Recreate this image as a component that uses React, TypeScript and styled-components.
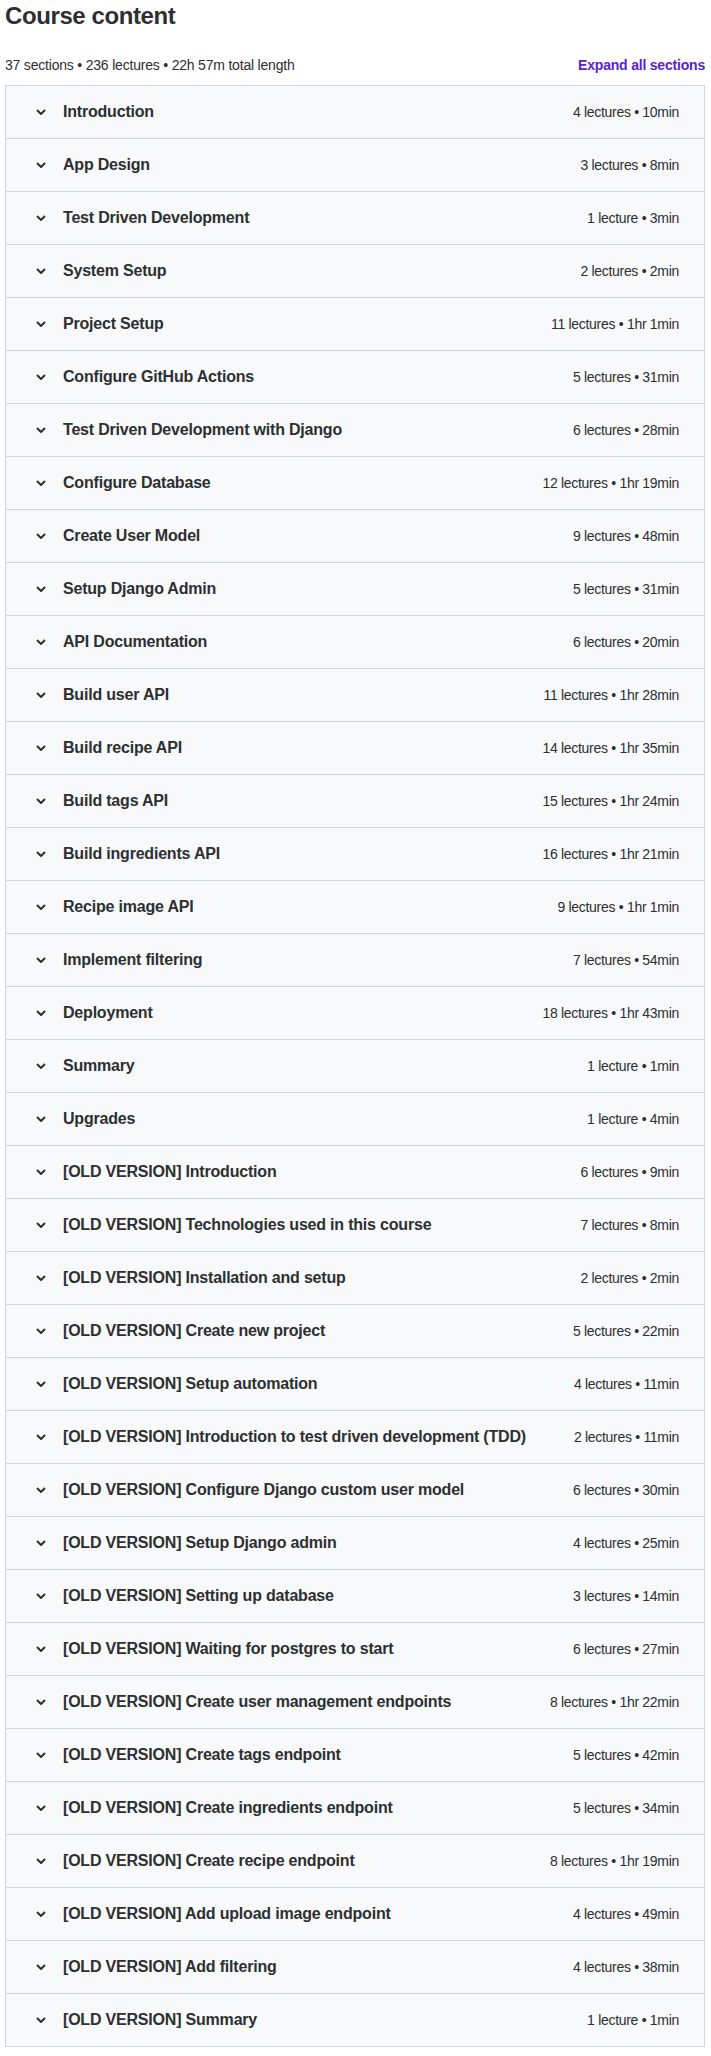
import React from "react";
import styled, { createGlobalStyle } from "styled-components";

const GlobalStyle = createGlobalStyle`
  html, body { margin: 0; padding: 0; background: #ffffff; }
  body {
    font-family: "Liberation Sans", Arial, sans-serif;
    color: #2d2f31;
    -webkit-font-smoothing: antialiased;
  }
`;

const Page = styled.div`
  padding: 0 6px 10px 5px;
`;

const Heading = styled.h2`
  margin: 1px 0 0;
  font-size: 24px;
  line-height: 29px;
  font-weight: 700;
  letter-spacing: -0.4px;
  color: #2d2f31;
`;

const SummaryBar = styled.div`
  display: flex;
  align-items: center;
  justify-content: space-between;
  margin-top: 25px;
  height: 20px;
  margin-bottom: 10px;
`;

const SummaryText = styled.span`
  font-size: 14px;
  line-height: 20px;
  color: #2d2f31;
  letter-spacing: -0.2px;
`;

const ExpandLink = styled.button`
  border: 0;
  background: none;
  padding: 0;
  font-family: inherit;
  font-size: 14px;
  line-height: 20px;
  font-weight: 700;
  color: #5624d0;
  letter-spacing: -0.2px;
  cursor: pointer;
`;

const Accordion = styled.div`
  border: 1px solid #d1d7dc;
`;

const Row = styled.div`
  display: flex;
  align-items: center;
  height: 52px;
  padding: 0 25px 0 29px;
  background: #f7f9fa;
  & + & {
    border-top: 1px solid #d1d7dc;
  }
`;

const Chevron = styled.span`
  display: flex;
  align-items: center;
  justify-content: center;
  width: 12px;
  height: 12px;
  margin-right: 16px;
  color: #2d2f31;
`;

const Title = styled.span`
  flex: 1;
  font-size: 16px;
  line-height: 20px;
  font-weight: 700;
  color: #2d2f31;
  white-space: nowrap;
  letter-spacing: -0.2px;
`;

const Meta = styled.span`
  font-size: 14px;
  line-height: 20px;
  color: #2d2f31;
  white-space: nowrap;
  margin-left: 16px;
  letter-spacing: -0.3px;
`;

type Section = [string, string];

const sections: Section[] = [
  ["Introduction", "4 lectures • 10min"],
  ["App Design", "3 lectures • 8min"],
  ["Test Driven Development", "1 lecture • 3min"],
  ["System Setup", "2 lectures • 2min"],
  ["Project Setup", "11 lectures • 1hr 1min"],
  ["Configure GitHub Actions", "5 lectures • 31min"],
  ["Test Driven Development with Django", "6 lectures • 28min"],
  ["Configure Database", "12 lectures • 1hr 19min"],
  ["Create User Model", "9 lectures • 48min"],
  ["Setup Django Admin", "5 lectures • 31min"],
  ["API Documentation", "6 lectures • 20min"],
  ["Build user API", "11 lectures • 1hr 28min"],
  ["Build recipe API", "14 lectures • 1hr 35min"],
  ["Build tags API", "15 lectures • 1hr 24min"],
  ["Build ingredients API", "16 lectures • 1hr 21min"],
  ["Recipe image API", "9 lectures • 1hr 1min"],
  ["Implement filtering", "7 lectures • 54min"],
  ["Deployment", "18 lectures • 1hr 43min"],
  ["Summary", "1 lecture • 1min"],
  ["Upgrades", "1 lecture • 4min"],
  ["[OLD VERSION] Introduction", "6 lectures • 9min"],
  ["[OLD VERSION] Technologies used in this course", "7 lectures • 8min"],
  ["[OLD VERSION] Installation and setup", "2 lectures • 2min"],
  ["[OLD VERSION] Create new project", "5 lectures • 22min"],
  ["[OLD VERSION] Setup automation", "4 lectures • 11min"],
  ["[OLD VERSION] Introduction to test driven development (TDD)", "2 lectures • 11min"],
  ["[OLD VERSION] Configure Django custom user model", "6 lectures • 30min"],
  ["[OLD VERSION] Setup Django admin", "4 lectures • 25min"],
  ["[OLD VERSION] Setting up database", "3 lectures • 14min"],
  ["[OLD VERSION] Waiting for postgres to start", "6 lectures • 27min"],
  ["[OLD VERSION] Create user management endpoints", "8 lectures • 1hr 22min"],
  ["[OLD VERSION] Create tags endpoint", "5 lectures • 42min"],
  ["[OLD VERSION] Create ingredients endpoint", "5 lectures • 34min"],
  ["[OLD VERSION] Create recipe endpoint", "8 lectures • 1hr 19min"],
  ["[OLD VERSION] Add upload image endpoint", "4 lectures • 49min"],
  ["[OLD VERSION] Add filtering", "4 lectures • 38min"],
  ["[OLD VERSION] Summary", "1 lecture • 1min"],
];

const ChevronIcon = () => (
  <svg width="10" height="6" viewBox="0 0 10 6" fill="none" aria-hidden="true">
    <path d="M1 1 L5 5 L9 1" stroke="currentColor" strokeWidth="2" strokeLinecap="butt" strokeLinejoin="miter" />
  </svg>
);

export default function App() {
  return (
    <Page>
      <GlobalStyle />
      <Heading>Course content</Heading>
      <SummaryBar>
        <SummaryText>37 sections • 236 lectures • 22h 57m total length</SummaryText>
        <ExpandLink type="button">Expand all sections</ExpandLink>
      </SummaryBar>
      <Accordion>
        {sections.map(([title, meta]) => (
          <Row key={title}>
            <Chevron>
              <ChevronIcon />
            </Chevron>
            <Title>{title}</Title>
            <Meta>{meta}</Meta>
          </Row>
        ))}
      </Accordion>
    </Page>
  );
}
